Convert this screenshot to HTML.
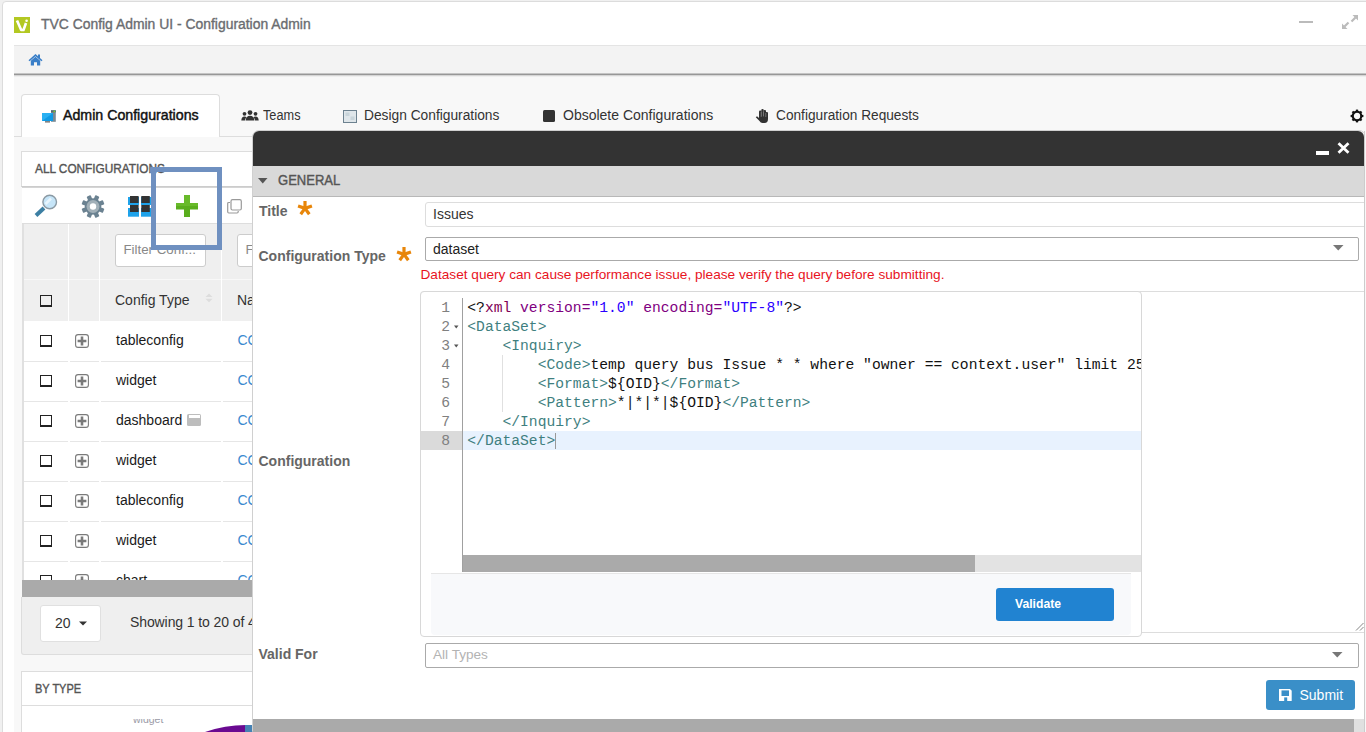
<!DOCTYPE html>
<html><head><meta charset="utf-8">
<style>
*{box-sizing:border-box;margin:0;padding:0}
html,body{width:1366px;height:732px;overflow:hidden;background:#f0f0f0;font-family:"Liberation Sans",sans-serif;position:relative}
.a{position:absolute}
.t{position:absolute;white-space:pre;line-height:1}
svg{position:absolute;overflow:visible}
.tg{color:#3f7f7f}
</style></head><body>
<div class="a" style="left:2px;top:1px;width:1370px;height:740px;background:#fff;border:1px solid #dcdcdc;border-radius:4px"></div>
<div class="a" style="left:14px;top:17px;width:16px;height:16px;background:#b3c822"></div>
<svg style="left:14px;top:17px" width="16" height="16"><path d="M3 3.5 L7.2 13 L9.5 13 L12 6" stroke="#fff" stroke-width="2.6" fill="none" stroke-linejoin="round"/><circle cx="12.6" cy="3.8" r="1.3" fill="#fff"/></svg>
<div class="t" style="left:41px;top:16.15px;font:normal 14px 'Liberation Sans';color:#6a6c70;-webkit-text-stroke:0.35px #6a6c70;transform:scaleX(0.993);transform-origin:0 0">TVC Config Admin UI - Configuration Admin</div>
<div class="a" style="left:1299px;top:21px;width:14px;height:2px;background:#bbb"></div>
<svg style="left:1341px;top:14px" width="18" height="16"><path d="M1 15 L1 9.5 L6.5 15 Z M17 1 L17 6.5 L11.5 1 Z" fill="#bbb"/><path d="M3.5 12.5 L7.5 8.5 M14.5 3.5 L10.5 7.5" stroke="#bbb" stroke-width="2.2"/></svg>
<div class="a" style="left:14px;top:45px;width:1352px;height:29px;background:#f3f3f3;border-top:1px solid #e4e4e4"></div>
<div class="a" style="left:14px;top:73px;width:1352px;height:1px;background:#c4c4c4"></div>
<div class="a" style="left:14px;top:74px;width:1352px;height:1px;background:#979797"></div>
<div class="a" style="left:14px;top:75px;width:1352px;height:1px;background:#d6d6d6"></div>
<div class="a" style="left:14px;top:76px;width:1352px;height:1px;background:#eeeeee"></div>
<svg style="left:28px;top:53px" width="15" height="13"><path d="M7.5 1 L0.5 7.2 L1.6 8.3 L7.5 3.2 L13.4 8.3 L14.5 7.2 L12 5 L12 1.5 L10 1.5 L10 3.2 Z" fill="#3a7fc8"/><path d="M2.8 7.8 L7.5 3.8 L12.2 7.8 L12.2 12.5 L9 12.5 L9 9.2 L6 9.2 L6 12.5 L2.8 12.5 Z" fill="#3a7fc8"/></svg>
<div class="a" style="left:14px;top:77px;width:1352px;height:655px;background:#f8f8f8"></div>
<div class="a" style="left:14px;top:136px;width:1352px;height:1px;background:#ddd"></div>
<div class="a" style="left:21px;top:94px;width:199px;height:43px;background:#fff;border:1px solid #ddd;border-bottom:none;border-radius:4px 4px 0 0"></div>
<div class="t" style="left:63px;top:107.18px;font:normal 14.2px 'Liberation Sans';color:#111;-webkit-text-stroke:0.45px #111">Admin Configurations</div>
<div class="t" style="left:263px;top:107.35px;font:normal 14px 'Liberation Sans';color:#333;transform:scaleX(0.91);transform-origin:0 0">Teams</div>
<div class="t" style="left:364.4px;top:107.35px;font:normal 14px 'Liberation Sans';color:#333;transform:scaleX(0.983);transform-origin:0 0">Design Configurations</div>
<div class="t" style="left:563px;top:107.35px;font:normal 14px 'Liberation Sans';color:#333;">Obsolete Configurations</div>
<div class="t" style="left:776px;top:107.35px;font:normal 14px 'Liberation Sans';color:#333;transform:scaleX(0.977);transform-origin:0 0">Configuration Requests</div>
<svg style="left:42px;top:110px" width="14" height="13"><rect x="9" y="0.3" width="4.8" height="11.5" fill="#7a8a95"/><rect x="9" y="0.3" width="4.8" height="2" fill="#5a6872"/><circle cx="12.3" cy="1.4" r="0.9" fill="#7c3"/><rect x="0" y="3" width="11" height="8" fill="#109ae4"/><path d="M0 3 H11 L0 11Z" fill="#2ab0f2"/><rect x="3" y="11.2" width="5" height="1.3" fill="#666"/></svg><svg style="left:241px;top:110px" width="18" height="11"><circle cx="9" cy="2.6" r="2.4" fill="#333"/><circle cx="3.5" cy="3.8" r="1.9" fill="#333"/><circle cx="14.5" cy="3.8" r="1.9" fill="#333"/><path d="M4.6 10.5 Q5 5.8 9 5.8 Q13 5.8 13.4 10.5Z" fill="#333"/><path d="M0.3 10.5 Q0.5 6.6 3.5 6.6 Q5 6.6 5.6 7.4 Q4 8.5 3.9 10.5Z M17.7 10.5 Q17.5 6.6 14.5 6.6 Q13 6.6 12.4 7.4 Q14 8.5 14.1 10.5Z" fill="#333"/></svg>
<svg style="left:343px;top:110px" width="14" height="13"><rect x="0.5" y="0.5" width="13" height="12" fill="#dfe6ea" stroke="#6d8290"/><rect x="2.5" y="2.5" width="4" height="3.5" fill="#c8d4da"/><rect x="7.5" y="6.5" width="4" height="3.5" fill="#c8d4da"/></svg>
<div class="a" style="left:543px;top:110px;width:12px;height:12px;background:#333;border-radius:1.5px"></div>
<svg style="left:755px;top:108px" width="14" height="15"><g fill="#333"><rect x="4" y="2.5" width="2.4" height="8" rx="1.1"/><rect x="6.3" y="1" width="2.4" height="9" rx="1.1"/><rect x="8.6" y="2" width="2.4" height="8" rx="1.1"/><rect x="10.6" y="4" width="2.4" height="7" rx="1.1"/><path d="M4 8 H13 V11 Q13 15 9.5 15 H7.5 Q5.5 15 4.5 13 L0.8 9.3 Q1.2 8.2 2.4 8.6 L4 10Z"/></g><g fill="#8a8a8a"><rect x="5.8" y="4" width="0.7" height="5"/><rect x="8.3" y="3.5" width="0.7" height="5"/><rect x="10.5" y="5" width="0.7" height="4"/></g></svg>
<svg style="left:1350px;top:109px" width="14" height="14" viewBox="0 0 14 14"><g fill="#111"><rect x="5.9" y="0.6" width="2.2" height="2.6" transform="rotate(0 7 7)"/><rect x="5.9" y="0.6" width="2.2" height="2.6" transform="rotate(45 7 7)"/><rect x="5.9" y="0.6" width="2.2" height="2.6" transform="rotate(90 7 7)"/><rect x="5.9" y="0.6" width="2.2" height="2.6" transform="rotate(135 7 7)"/><rect x="5.9" y="0.6" width="2.2" height="2.6" transform="rotate(180 7 7)"/><rect x="5.9" y="0.6" width="2.2" height="2.6" transform="rotate(225 7 7)"/><rect x="5.9" y="0.6" width="2.2" height="2.6" transform="rotate(270 7 7)"/><rect x="5.9" y="0.6" width="2.2" height="2.6" transform="rotate(315 7 7)"/></g><circle cx="7" cy="7" r="4.3" fill="none" stroke="#111" stroke-width="2.2"/></svg>
<div class="a" style="left:21px;top:151px;width:260px;height:36px;background:#fff;border:1px solid #ddd;border-bottom:1px solid #ccc"></div>
<div class="t" style="left:35px;top:161.53px;font:normal 12.6px 'Liberation Sans';color:#555;transform:scaleX(0.938);transform-origin:0 0;-webkit-text-stroke:0.4px #555">ALL CONFIGURATIONS</div>
<div class="a" style="left:22px;top:187px;width:240px;height:36px;background:#fff;border-top:1px solid #d5d5d5"></div>
<svg style="left:34px;top:194px" width="24" height="24"><line x1="2" y1="21.5" x2="10" y2="14" stroke="#3c7fa3" stroke-width="4" stroke-linecap="butt"/><circle cx="15.7" cy="8" r="6.8" fill="#c6e5f8" stroke="#8b9aa4" stroke-width="1.4"/><path d="M11.5 10 L17 4.5" stroke="#e8f5fd" stroke-width="2.5"/></svg>
<svg style="left:81px;top:195px" width="24" height="23" viewBox="0 0 24 23"><g fill="#6b8291"><rect x="9.8" y="0" width="4.4" height="5" rx="0.8" transform="rotate(22.5 12 11.5)"/><rect x="9.8" y="0" width="4.4" height="5" rx="0.8" transform="rotate(67.5 12 11.5)"/><rect x="9.8" y="0" width="4.4" height="5" rx="0.8" transform="rotate(112.5 12 11.5)"/><rect x="9.8" y="0" width="4.4" height="5" rx="0.8" transform="rotate(157.5 12 11.5)"/><rect x="9.8" y="0" width="4.4" height="5" rx="0.8" transform="rotate(202.5 12 11.5)"/><rect x="9.8" y="0" width="4.4" height="5" rx="0.8" transform="rotate(247.5 12 11.5)"/><rect x="9.8" y="0" width="4.4" height="5" rx="0.8" transform="rotate(292.5 12 11.5)"/><rect x="9.8" y="0" width="4.4" height="5" rx="0.8" transform="rotate(337.5 12 11.5)"/></g><circle cx="12" cy="11.5" r="8.3" fill="#6b8291"/><circle cx="12" cy="11.5" r="6.5" fill="#a2b0b8"/><circle cx="12" cy="11.5" r="3.2" fill="#fff"/></svg>
<svg style="left:124px;top:190px" width="32" height="32"><g fill="#1ea2ea"><rect x="4" y="7" width="11" height="8"/><rect x="17" y="7" width="10" height="8"/><rect x="4" y="18" width="11" height="8.7"/><rect x="17" y="18" width="10" height="8.7"/></g><g fill="#333"><rect x="6" y="6" width="8.6" height="7"/><rect x="17.3" y="6" width="8.5" height="7"/><rect x="6" y="15" width="8.6" height="7"/><rect x="17.3" y="15" width="8.5" height="7"/></g></svg>
<svg style="left:176px;top:195px" width="22" height="22"><path d="M8 0 H14 V8 H22 V14.5 H14 V22 H8 V14.5 H0 V8 H8 Z" fill="#5aae1e"/><path d="M8 0 H14 V8 H22 V11 H0 V8 H8 Z" fill="#72c232" opacity="0.6"/></svg>
<svg style="left:227px;top:199px" width="15" height="15"><rect x="4" y="0.7" width="10.3" height="10.3" rx="1.5" fill="#fff" stroke="#999" stroke-width="1.2"/><path d="M3 3.5 L1.8 3.5 Q0.7 3.5 0.7 4.6 L0.7 12.8 Q0.7 14 1.8 14 L10 14 Q11.2 14 11.2 12.8 L11.2 12" fill="none" stroke="#999" stroke-width="1.2"/></svg>
<div class="a" style="left:22px;top:223px;width:240px;height:1px;background:#ddd"></div>
<div class="a" style="left:22px;top:224px;width:240px;height:97px;background:#efefef;border-left:2px solid #e0e0e0"></div>
<div class="a" style="left:24px;top:279px;width:230px;height:1px;background:#f8f8f8"></div>
<div class="a" style="left:68px;top:224px;width:1px;height:97px;background:#fff"></div>
<div class="a" style="left:99px;top:224px;width:1px;height:97px;background:#fff"></div>
<div class="a" style="left:221px;top:224px;width:1px;height:97px;background:#fff"></div>
<div class="a" style="left:115px;top:234px;width:91px;height:33px;background:#fff;border:1px solid #ccc;border-radius:3px"></div>
<div class="t" style="left:123.5px;top:242.44px;font:normal 13.3px 'Liberation Sans';color:#888;">Filter Conf...</div>
<div class="a" style="left:237px;top:234px;width:40px;height:33px;background:#fff;border:1px solid #ccc;border-radius:3px"></div>
<div class="t" style="left:245.5px;top:242.44px;font:normal 13.3px 'Liberation Sans';color:#888;">F</div>
<div class="a" style="left:40px;top:295px;width:12px;height:12px;border:1px solid #222;border-bottom:2px solid #222;background:transparent"></div>
<div class="t" style="left:115px;top:292.35px;font:normal 14px 'Liberation Sans';color:#333;">Config Type</div>
<svg style="left:205px;top:293px" width="8" height="10"><path d="M0.5 4 L4 0.5 L7.5 4Z M0.5 5.8 L4 9.3 L7.5 5.8Z" fill="#ddd"/></svg>
<div class="t" style="left:237px;top:292.35px;font:normal 14px 'Liberation Sans';color:#333;">Na</div>
<div class="a" style="left:22px;top:321px;width:240px;height:259px;background:#fff;border-left:2px solid #e0e0e0"></div>
<div class="a" style="left:40px;top:335px;width:12px;height:12px;border:1px solid #222;border-bottom:2px solid #222;background:transparent"></div>
<svg style="left:75px;top:334px" width="14" height="14"><rect x="0.6" y="0.6" width="12.8" height="12.8" rx="2.5" fill="#fff" stroke="#7a7a7a" stroke-width="1.1"/><path d="M7 2.6 V11.4 M2.6 7 H11.4" stroke="#7a7a7a" stroke-width="2.6"/></svg>
<div class="t" style="left:116px;top:331.95px;font:normal 14px 'Liberation Sans';color:#1a1a1a;">tableconfig</div>
<div class="t" style="left:237.5px;top:331.95px;font:normal 14px 'Liberation Sans';color:#3a8ad0;">CO</div>
<div class="a" style="left:24px;top:361px;width:44px;height:1px;background:#e6e6e6"></div>
<div class="a" style="left:69.5px;top:361px;width:29.5px;height:1px;background:#e6e6e6"></div>
<div class="a" style="left:100.5px;top:361px;width:120.5px;height:1px;background:#e6e6e6"></div>
<div class="a" style="left:222.5px;top:361px;width:39.5px;height:1px;background:#e6e6e6"></div>
<div class="a" style="left:40px;top:375px;width:12px;height:12px;border:1px solid #222;border-bottom:2px solid #222;background:transparent"></div>
<svg style="left:75px;top:374px" width="14" height="14"><rect x="0.6" y="0.6" width="12.8" height="12.8" rx="2.5" fill="#fff" stroke="#7a7a7a" stroke-width="1.1"/><path d="M7 2.6 V11.4 M2.6 7 H11.4" stroke="#7a7a7a" stroke-width="2.6"/></svg>
<div class="t" style="left:116px;top:371.95px;font:normal 14px 'Liberation Sans';color:#1a1a1a;">widget</div>
<div class="t" style="left:237.5px;top:371.95px;font:normal 14px 'Liberation Sans';color:#3a8ad0;">CO</div>
<div class="a" style="left:24px;top:401px;width:44px;height:1px;background:#e6e6e6"></div>
<div class="a" style="left:69.5px;top:401px;width:29.5px;height:1px;background:#e6e6e6"></div>
<div class="a" style="left:100.5px;top:401px;width:120.5px;height:1px;background:#e6e6e6"></div>
<div class="a" style="left:222.5px;top:401px;width:39.5px;height:1px;background:#e6e6e6"></div>
<div class="a" style="left:40px;top:415px;width:12px;height:12px;border:1px solid #222;border-bottom:2px solid #222;background:transparent"></div>
<svg style="left:75px;top:414px" width="14" height="14"><rect x="0.6" y="0.6" width="12.8" height="12.8" rx="2.5" fill="#fff" stroke="#7a7a7a" stroke-width="1.1"/><path d="M7 2.6 V11.4 M2.6 7 H11.4" stroke="#7a7a7a" stroke-width="2.6"/></svg>
<div class="t" style="left:116px;top:411.95px;font:normal 14px 'Liberation Sans';color:#1a1a1a;">dashboard</div>
<div class="t" style="left:237.5px;top:411.95px;font:normal 14px 'Liberation Sans';color:#3a8ad0;">CO</div>
<div class="a" style="left:187px;top:414px;width:14px;height:11.7px;background:#bdbdbd;border-radius:1.5px"></div>
<div class="a" style="left:189px;top:415px;width:10.5px;height:3px;background:#fff"></div>
<div class="a" style="left:24px;top:441px;width:44px;height:1px;background:#e6e6e6"></div>
<div class="a" style="left:69.5px;top:441px;width:29.5px;height:1px;background:#e6e6e6"></div>
<div class="a" style="left:100.5px;top:441px;width:120.5px;height:1px;background:#e6e6e6"></div>
<div class="a" style="left:222.5px;top:441px;width:39.5px;height:1px;background:#e6e6e6"></div>
<div class="a" style="left:40px;top:455px;width:12px;height:12px;border:1px solid #222;border-bottom:2px solid #222;background:transparent"></div>
<svg style="left:75px;top:454px" width="14" height="14"><rect x="0.6" y="0.6" width="12.8" height="12.8" rx="2.5" fill="#fff" stroke="#7a7a7a" stroke-width="1.1"/><path d="M7 2.6 V11.4 M2.6 7 H11.4" stroke="#7a7a7a" stroke-width="2.6"/></svg>
<div class="t" style="left:116px;top:451.95px;font:normal 14px 'Liberation Sans';color:#1a1a1a;">widget</div>
<div class="t" style="left:237.5px;top:451.95px;font:normal 14px 'Liberation Sans';color:#3a8ad0;">CO</div>
<div class="a" style="left:24px;top:481px;width:44px;height:1px;background:#e6e6e6"></div>
<div class="a" style="left:69.5px;top:481px;width:29.5px;height:1px;background:#e6e6e6"></div>
<div class="a" style="left:100.5px;top:481px;width:120.5px;height:1px;background:#e6e6e6"></div>
<div class="a" style="left:222.5px;top:481px;width:39.5px;height:1px;background:#e6e6e6"></div>
<div class="a" style="left:40px;top:495px;width:12px;height:12px;border:1px solid #222;border-bottom:2px solid #222;background:transparent"></div>
<svg style="left:75px;top:494px" width="14" height="14"><rect x="0.6" y="0.6" width="12.8" height="12.8" rx="2.5" fill="#fff" stroke="#7a7a7a" stroke-width="1.1"/><path d="M7 2.6 V11.4 M2.6 7 H11.4" stroke="#7a7a7a" stroke-width="2.6"/></svg>
<div class="t" style="left:116px;top:491.95px;font:normal 14px 'Liberation Sans';color:#1a1a1a;">tableconfig</div>
<div class="t" style="left:237.5px;top:491.95px;font:normal 14px 'Liberation Sans';color:#3a8ad0;">CO</div>
<div class="a" style="left:24px;top:521px;width:44px;height:1px;background:#e6e6e6"></div>
<div class="a" style="left:69.5px;top:521px;width:29.5px;height:1px;background:#e6e6e6"></div>
<div class="a" style="left:100.5px;top:521px;width:120.5px;height:1px;background:#e6e6e6"></div>
<div class="a" style="left:222.5px;top:521px;width:39.5px;height:1px;background:#e6e6e6"></div>
<div class="a" style="left:40px;top:535px;width:12px;height:12px;border:1px solid #222;border-bottom:2px solid #222;background:transparent"></div>
<svg style="left:75px;top:534px" width="14" height="14"><rect x="0.6" y="0.6" width="12.8" height="12.8" rx="2.5" fill="#fff" stroke="#7a7a7a" stroke-width="1.1"/><path d="M7 2.6 V11.4 M2.6 7 H11.4" stroke="#7a7a7a" stroke-width="2.6"/></svg>
<div class="t" style="left:116px;top:531.95px;font:normal 14px 'Liberation Sans';color:#1a1a1a;">widget</div>
<div class="t" style="left:237.5px;top:531.95px;font:normal 14px 'Liberation Sans';color:#3a8ad0;">CO</div>
<div class="a" style="left:24px;top:561px;width:44px;height:1px;background:#e6e6e6"></div>
<div class="a" style="left:69.5px;top:561px;width:29.5px;height:1px;background:#e6e6e6"></div>
<div class="a" style="left:100.5px;top:561px;width:120.5px;height:1px;background:#e6e6e6"></div>
<div class="a" style="left:222.5px;top:561px;width:39.5px;height:1px;background:#e6e6e6"></div>
<div class="a" style="left:40px;top:575px;width:12px;height:12px;border:1px solid #222;border-bottom:2px solid #222;background:transparent"></div>
<svg style="left:75px;top:574px" width="14" height="14"><rect x="0.6" y="0.6" width="12.8" height="12.8" rx="2.5" fill="#fff" stroke="#7a7a7a" stroke-width="1.1"/><path d="M7 2.6 V11.4 M2.6 7 H11.4" stroke="#7a7a7a" stroke-width="2.6"/></svg>
<div class="t" style="left:116px;top:571.95px;font:normal 14px 'Liberation Sans';color:#1a1a1a;">chart</div>
<div class="t" style="left:237.5px;top:571.95px;font:normal 14px 'Liberation Sans';color:#3a8ad0;">CO</div>
<div class="a" style="left:22px;top:580px;width:240px;height:17px;background:#aaa"></div>
<div class="a" style="left:21px;top:597px;width:240px;height:58px;background:#efefef;border:1px solid #ddd;border-top:none;border-radius:0 0 3px 3px"></div>
<div class="a" style="left:40px;top:605px;width:61px;height:37px;background:#fff;border:1px solid #e0e0e0;border-radius:3px"></div>
<div class="t" style="left:55px;top:615.35px;font:normal 14px 'Liberation Sans';color:#333;">20</div>
<svg style="left:79px;top:621px" width="8" height="5"><path d="M0 0.5 H8 L4 4.5Z" fill="#333"/></svg>
<div class="t" style="left:130px;top:613.85px;font:normal 14px 'Liberation Sans';color:#333;letter-spacing:-0.1px">Showing 1 to 20 of 4</div>
<div class="a" style="left:21px;top:671px;width:260px;height:35px;background:#fff;border:1px solid #ddd"></div>
<div class="t" style="left:35px;top:681.70px;font:normal 12.4px 'Liberation Sans';color:#555;transform:scaleX(0.89);transform-origin:0 0;-webkit-text-stroke:0.4px #555">BY TYPE</div>
<div class="a" style="left:21px;top:706px;width:260px;height:30px;background:#fff;border-left:1px solid #ddd"></div>
<div class="a" style="left:0;top:719px;width:250px;height:13px;overflow:hidden"><div class="t" style="left:133px;top:-5.69px;font:normal 10.5px 'Liberation Sans';color:#9a9aa6;">widget</div>
</div><svg style="left:190px;top:722px" width="70" height="12"><path d="M15 10 Q35 3 56 3 L56 12 L15 12Z" fill="#6a0a91"/><rect x="55" y="3" width="9" height="10" fill="#4682b4"/></svg>
<div class="a" style="left:252px;top:130px;width:1114px;height:602px;border:1px solid #d0d0d0;border-radius:7px 7px 0 0;background:transparent"></div>
<div class="a" style="left:253px;top:131px;width:1111px;height:601px;background:#fff;border-radius:6px 6px 0 0;overflow:hidden"></div>
<div class="a" style="left:253px;top:131px;width:1111px;height:35px;background:#333;border-radius:6px 6px 0 0"></div>
<div class="a" style="left:1316px;top:151px;width:13px;height:3.5px;background:#fff"></div>
<svg style="left:1337px;top:142px" width="13" height="12"><path d="M1.5 1.2 L11.5 10.8 M11.5 1.2 L1.5 10.8" stroke="#fff" stroke-width="2.8"/></svg>
<div class="a" style="left:253px;top:166px;width:1113px;height:31px;background:#d9d9d9;border-bottom:1px solid #b8b8b8"></div>
<svg style="left:258px;top:178px" width="10" height="6"><path d="M0 0 H9.5 L4.75 5.5Z" fill="#555"/></svg>
<div class="t" style="left:277.8px;top:172.35px;font:normal 14px 'Liberation Sans';color:#555;transform:scaleX(0.93);transform-origin:0 0;-webkit-text-stroke:0.4px #555">GENERAL</div>
<div class="t" style="left:259px;top:203.35px;font:bold 14px 'Liberation Sans';color:#666;">Title</div>
<svg style="left:298px;top:201px" width="14" height="13"><g fill="#e8860a"><rect x="5.4" y="0" width="3.2" height="7.5" transform="rotate(0 7 7.3)"/><rect x="5.4" y="0" width="3.2" height="7.5" transform="rotate(72 7 7.3)"/><rect x="5.4" y="0" width="3.2" height="7.5" transform="rotate(144 7 7.3)"/><rect x="5.4" y="0" width="3.2" height="7.5" transform="rotate(216 7 7.3)"/><rect x="5.4" y="0" width="3.2" height="7.5" transform="rotate(288 7 7.3)"/></g></svg>
<div class="a" style="left:425px;top:202px;width:945px;height:25px;background:#fff;border:1px solid #ddd;border-radius:3px"></div>
<div class="t" style="left:433px;top:206.35px;font:normal 14px 'Liberation Sans';color:#333;">Issues</div>
<div class="t" style="left:258.5px;top:248.35px;font:bold 14px 'Liberation Sans';color:#666;">Configuration Type</div>
<svg style="left:397px;top:247px" width="14" height="13"><g fill="#e8860a"><rect x="5.4" y="0" width="3.2" height="7.5" transform="rotate(0 7 7.3)"/><rect x="5.4" y="0" width="3.2" height="7.5" transform="rotate(72 7 7.3)"/><rect x="5.4" y="0" width="3.2" height="7.5" transform="rotate(144 7 7.3)"/><rect x="5.4" y="0" width="3.2" height="7.5" transform="rotate(216 7 7.3)"/><rect x="5.4" y="0" width="3.2" height="7.5" transform="rotate(288 7 7.3)"/></g></svg>
<div class="a" style="left:425px;top:237px;width:934px;height:24px;background:#fff;border:1px solid #aaa;border-radius:2px"></div>
<div class="t" style="left:433px;top:241.35px;font:normal 14px 'Liberation Sans';color:#222;">dataset</div>
<svg style="left:1333px;top:245px" width="11" height="6"><path d="M0 0 H10.5 L5.25 5.5Z" fill="#777"/></svg>
<div class="t" style="left:420.5px;top:266.65px;font:normal 13.65px 'Liberation Sans';color:#e8141e;">Dataset query can cause performance issue, please verify the query before submitting.</div>
<div class="a" style="left:420px;top:291px;width:950px;height:342px;background:#fff;border:1px solid #ddd;border-radius:4px"></div>
<svg style="left:1355px;top:622px" width="9" height="9"><path d="M8.5 1 L1 8.5 M8.5 5 L5 8.5" stroke="#777" stroke-width="0.9"/></svg>
<div class="a" style="left:420px;top:291px;width:722px;height:346px;background:#fff;border:1px solid #d8d8d8;border-radius:4px"></div>
<div class="a" style="left:462px;top:298px;width:1px;height:274px;background:#a0a0a0"></div>
<div class="a" style="left:421px;top:431px;width:41px;height:19px;background:#dadada"></div>
<div class="a" style="left:463px;top:431px;width:678px;height:19px;background:#e8f2fe"></div>
<div class="a" style="left:502px;top:355px;width:1px;height:57px;background:#e0e0e0"></div>
<div class="a" style="left:467.3px;top:299px;width:674px;height:152px;overflow:hidden;font:14.67px 'Liberation Mono';line-height:19px;white-space:pre;color:#111">&lt;?<span style="color:#7f0055">xml</span> <span style="color:#7f007f">version=</span><span style="color:#2a00ff">"1.0"</span> <span style="color:#7f007f">encoding=</span><span style="color:#2a00ff">"UTF-8"</span>?&gt;
<span class="tg">&lt;DataSet&gt;</span>
    <span class="tg">&lt;Inquiry&gt;</span>
        <span class="tg">&lt;Code&gt;</span>temp query bus Issue * * where "owner == context.user" limit 25
        <span class="tg">&lt;Format&gt;</span>${OID}<span class="tg">&lt;/Format&gt;</span>
        <span class="tg">&lt;Pattern&gt;</span>*|*|*|${OID}<span class="tg">&lt;/Pattern&gt;</span>
    <span class="tg">&lt;/Inquiry&gt;</span>
<span class="tg">&lt;/DataSet&gt;</span></div>
<div class="a" style="left:421px;top:299px;width:29px;font:14.67px 'Liberation Mono';line-height:19px;white-space:pre;color:#808080;text-align:right">1
2
3
4
5
6
7
8</div>
<svg style="left:454px;top:325px" width="5" height="4"><path d="M0 0.5 H4.5 L2.25 3.5Z" fill="#555"/></svg>
<svg style="left:454px;top:344px" width="5" height="4"><path d="M0 0.5 H4.5 L2.25 3.5Z" fill="#555"/></svg>
<div class="a" style="left:555px;top:433px;width:1px;height:16px;background:#999"></div>
<div class="a" style="left:463px;top:555px;width:678px;height:17px;background:#e3e3e3"></div>
<div class="a" style="left:463px;top:555px;width:512px;height:17px;background:#aaa"></div>
<div class="a" style="left:431px;top:573px;width:700px;height:62px;background:#f8f9fb;border-top:1px solid #e6e6e6;border-radius:0 0 4px 4px"></div>
<div class="a" style="left:996px;top:588px;width:118px;height:33px;background:#2183d1;border-radius:3px"></div>
<div class="t" style="left:1015px;top:596.87px;font:bold 12.2px 'Liberation Sans';color:#fff;">Validate</div>
<div class="t" style="left:258.5px;top:452.75px;font:bold 14px 'Liberation Sans';color:#666;">Configuration</div>
<div class="t" style="left:258.5px;top:646.35px;font:bold 14px 'Liberation Sans';color:#666;">Valid For</div>
<div class="a" style="left:425px;top:643px;width:934px;height:25px;background:#fff;border:1px solid #aaa;border-radius:2px"></div>
<div class="t" style="left:433px;top:647.19px;font:normal 13.6px 'Liberation Sans';color:#b3b3b3;">All Types</div>
<svg style="left:1332px;top:652px" width="11" height="6"><path d="M0 0 H10.5 L5.25 5.5Z" fill="#777"/></svg>
<div class="a" style="left:1266px;top:680px;width:89px;height:30px;background:#3a8fc8;border-radius:3px"></div>
<svg style="left:1279px;top:689px" width="13" height="12"><path d="M0 0 H11 L12.7 1.7 V12 H0 Z" fill="#fff"/><rect x="2.5" y="1.4" width="7.5" height="5.6" fill="#3a8fc8"/><rect x="5.2" y="8.4" width="3" height="3.6" fill="#3a8fc8"/></svg>
<div class="t" style="left:1299.5px;top:687.05px;font:normal 14px 'Liberation Sans';color:#fff;">Submit</div>
<div class="a" style="left:253px;top:719px;width:1101px;height:13px;background:#aaa"></div>
<div class="a" style="left:1354px;top:719px;width:10px;height:13px;background:#e0e0e0"></div>
<div class="a" style="left:1364px;top:131px;width:2px;height:601px;background:#f8f8f8;border-left:1px solid #ccc"></div>
<div class="a" style="left:151px;top:167px;width:71px;height:83px;border:5px solid #6f90c0"></div>
</body></html>
